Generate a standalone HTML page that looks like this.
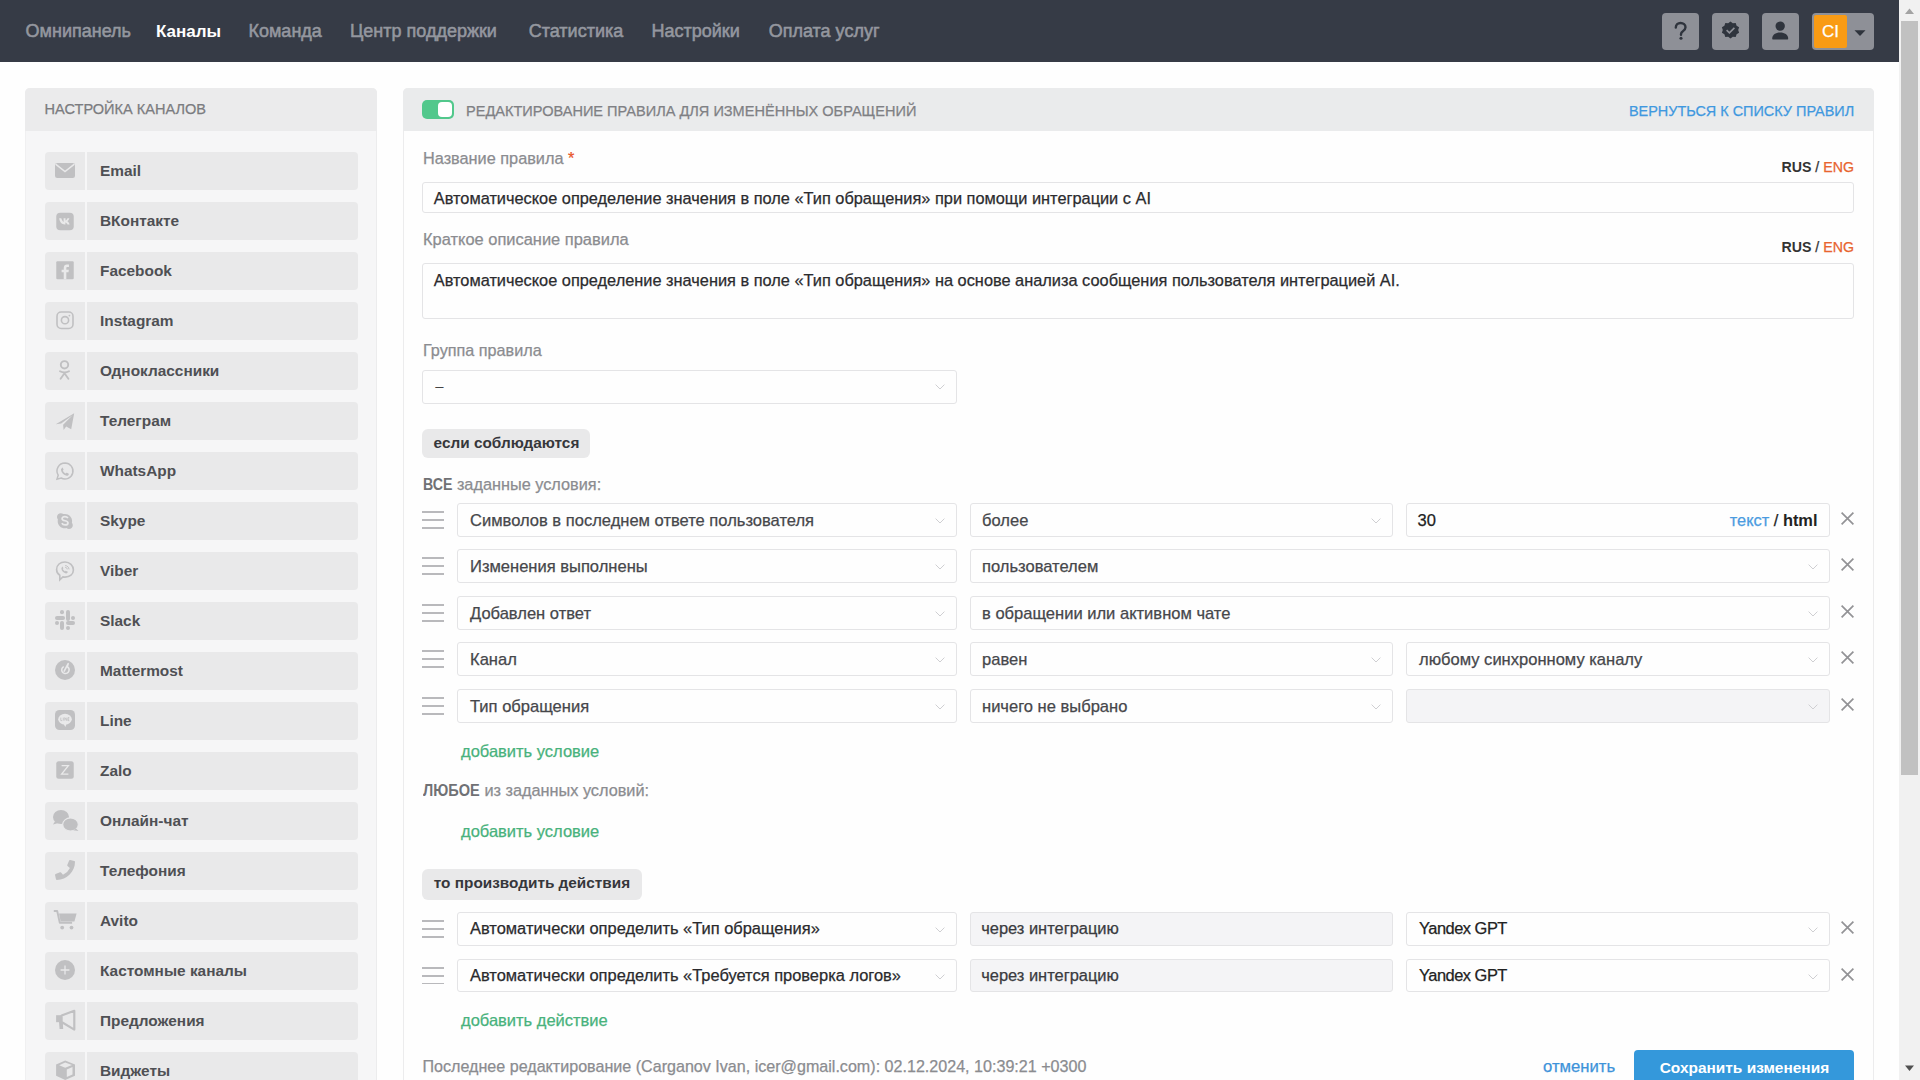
<!DOCTYPE html>
<html><head><meta charset="utf-8"><title>Rule editor</title>
<style>
html,body{margin:0;padding:0;width:1920px;height:1080px;overflow:hidden;background:#fefefe;}
body{position:relative;font-family:"Liberation Sans",sans-serif;}
.t{position:absolute;white-space:nowrap;-webkit-text-stroke:0.25px currentColor;}
.r{position:absolute;}
b{font-weight:700;-webkit-text-stroke:0;}
.tb{-webkit-text-stroke:0;}
</style></head><body>
<div class="r" style="left:0px;top:0px;width:1899px;height:62px;background:#363b46;"></div>
<div class="t" style="left:25.6px;top:20.06px;font-size:18px;line-height:22px;font-weight:400;color:#94979f;width:107px;-webkit-text-stroke:0.55px currentColor;">Омнипанель</div>
<div class="t tb" style="left:156px;top:20.91px;font-size:17px;line-height:21px;font-weight:700;color:#ffffff;width:68px;">Каналы</div>
<div class="t" style="left:248.5px;top:20.06px;font-size:18px;line-height:22px;font-weight:400;color:#94979f;width:77.5px;-webkit-text-stroke:0.55px currentColor;">Команда</div>
<div class="t" style="left:350px;top:20.06px;font-size:18px;line-height:22px;font-weight:400;color:#94979f;width:154.6px;-webkit-text-stroke:0.55px currentColor;">Центр поддержки</div>
<div class="t" style="left:528.7px;top:20.06px;font-size:18px;line-height:22px;font-weight:400;color:#94979f;width:99.3px;-webkit-text-stroke:0.55px currentColor;">Статистика</div>
<div class="t" style="left:651.5px;top:20.06px;font-size:18px;line-height:22px;font-weight:400;color:#94979f;width:93.5px;-webkit-text-stroke:0.55px currentColor;">Настройки</div>
<div class="t" style="left:768.7px;top:20.06px;font-size:18px;line-height:22px;font-weight:400;color:#94979f;width:111px;-webkit-text-stroke:0.55px currentColor;">Оплата услуг</div>
<div class="r" style="left:1662px;top:12.5px;width:37px;height:37.5px;background:#8e9097;border-radius:4px;"></div>
<div class="r" style="left:1712px;top:12.5px;width:37px;height:37.5px;background:#8e9097;border-radius:4px;"></div>
<div class="r" style="left:1762px;top:12.5px;width:37px;height:37.5px;background:#8e9097;border-radius:4px;"></div>
<svg class="r" style="left:1662px;top:12.5px" width="37" height="38" viewBox="0 0 37 38"><path d="M13.8 14.6c0-2.8 2.1-4.6 4.8-4.6s4.9 1.8 4.9 4.3c0 2-1.2 3-2.6 3.9-1.2.8-1.9 1.5-1.9 3v.6" fill="none" stroke="#2f343d" stroke-width="2.4" stroke-linecap="round"/><circle cx="19" cy="25.2" r="1.55" fill="#2f343d"/></svg>
<svg class="r" style="left:1712px;top:11.2px" width="37" height="38" viewBox="0 0 37 38"><path d="M18.5 10.5l2.3 1.7 2.9-.2.9 2.7 2.5 1.5-.9 2.8.9 2.8-2.5 1.5-.9 2.7-2.9-.2-2.3 1.7-2.3-1.7-2.9.2-.9-2.7-2.5-1.5.9-2.8-.9-2.8 2.5-1.5.9-2.7 2.9.2z" fill="#2f343d"/><path d="M14.6 19.2l2.8 2.7 5-5" fill="none" stroke="#8e9097" stroke-width="1.6"/></svg>
<svg class="r" style="left:1762px;top:12.5px" width="37" height="38" viewBox="0 0 37 38"><circle cx="18.2" cy="13.1" r="4.7" fill="#2f343d"/><path d="M10.2 25.8c0-4.1 3.6-6.2 8-6.2s8 2.1 8 6.2c0 .4-.3.7-.7.7H10.9c-.4 0-.7-.3-.7-.7z" fill="#2f343d"/></svg>
<div class="r" style="left:1812px;top:12.5px;width:62px;height:37.5px;background:#8e9097;border-radius:4px;"></div>
<div class="r" style="left:1814px;top:14.8px;width:33px;height:33.2px;background:#f99b14;border-radius:2px;"></div>
<div class="t" style="left:1830.5px;top:21.11px;font-size:17px;line-height:21px;font-weight:400;color:#ffffff;transform:translateX(-50%);">CI</div>
<svg class="r" style="left:1854px;top:29px" width="12" height="8" viewBox="0 0 12 8"><path d="M0.5 1.2h11L6 7z" fill="#2f343d"/></svg>
<div class="r" style="left:1899px;top:0px;width:21px;height:1080px;background:#f1f1f1;"></div>
<div class="r" style="left:1901px;top:21px;width:17px;height:754px;background:#c1c1c1;"></div>
<svg class="r" style="left:1899px;top:0" width="21" height="21" viewBox="0 0 21 21"><path d="M6 14h9l-4.5-5.4z" fill="#a3a3a3"/></svg>
<svg class="r" style="left:1899px;top:1059px" width="21" height="21" viewBox="0 0 21 21"><path d="M6 6.5h9l-4.5 5.4z" fill="#505050"/></svg>
<div class="r" style="left:25px;top:88px;width:352px;height:1000px;background:#f6f6f7;border-radius:5px 5px 0 0;box-shadow:inset -1px 0 0 #ececed, inset 1px 0 0 #f0f0f1;"></div>
<div class="r" style="left:25px;top:88px;width:352px;height:42.5px;background:#ebebec;border-radius:5px 5px 0 0;"></div>
<div class="t" style="left:44.6px;top:100.16px;font-size:14.55px;line-height:18px;font-weight:400;color:#7b7c80;">НАСТРОЙКА КАНАЛОВ</div>
<div class="r" style="left:45px;top:152px;width:40px;height:38px;background:#e9e9ea;border-radius:4px 0 0 4px;"></div>
<div class="r" style="left:87px;top:152px;width:271px;height:38px;background:#e9e9ea;border-radius:0 4px 4px 0;"></div>
<div class="t tb" style="left:100px;top:161.16px;font-size:15.4px;line-height:19px;font-weight:700;color:#4f5054;">Email</div>
<svg class="r" style="left:55px;top:160px" width="20" height="20" viewBox="0 0 20 20" overflow="visible"><rect x="0" y="3" width="20" height="15" rx="2.2" fill="#c0c0c2"/><path d="M0.6 4.2L10 11.6 19.4 4.2" fill="none" stroke="#e9e9ea" stroke-width="1.5"/></svg>
<div class="r" style="left:45px;top:202px;width:40px;height:38px;background:#e9e9ea;border-radius:4px 0 0 4px;"></div>
<div class="r" style="left:87px;top:202px;width:271px;height:38px;background:#e9e9ea;border-radius:0 4px 4px 0;"></div>
<div class="t tb" style="left:100px;top:211.16px;font-size:15.4px;line-height:19px;font-weight:700;color:#4f5054;">ВКонтакте</div>
<svg class="r" style="left:55px;top:210px" width="20" height="20" viewBox="0 0 20 20" overflow="visible"><rect x="1.25" y="2.8" width="17.5" height="17.5" rx="4" fill="#c0c0c2"/><path d="M4.2 8.3h2.1c.7 2 1.6 3.4 2.3 3.6V8.3h1.9v2.2c.8-.1 1.5-1.1 2-2.2h1.9c-.4 1.4-1.4 2.6-2.1 3 .7.3 1.8 1.3 2.3 3.1h-2.1c-.5-1.1-1.3-1.9-2.1-2v2H9.9c-3.3 0-5.3-2.3-5.7-6.1z" fill="#e9e9ea"/></svg>
<div class="r" style="left:45px;top:252px;width:40px;height:38px;background:#e9e9ea;border-radius:4px 0 0 4px;"></div>
<div class="r" style="left:87px;top:252px;width:271px;height:38px;background:#e9e9ea;border-radius:0 4px 4px 0;"></div>
<div class="t tb" style="left:100px;top:261.16px;font-size:15.4px;line-height:19px;font-weight:700;color:#4f5054;">Facebook</div>
<svg class="r" style="left:55px;top:260px" width="20" height="20" viewBox="0 0 20 20" overflow="visible"><rect x="1.25" y="1.25" width="17.5" height="18" rx="1.2" fill="#c0c0c2"/><path d="M11.3 19.25v-6.9h2.2l.35-2.6h-2.55V8.2c0-.75.25-1.25 1.3-1.25h1.35V4.6c-.25 0-1-.1-1.95-.1-1.95 0-3.25 1.2-3.25 3.35v1.9H6.6v2.6h2.15v6.9z" fill="#e9e9ea"/></svg>
<div class="r" style="left:45px;top:302px;width:40px;height:38px;background:#e9e9ea;border-radius:4px 0 0 4px;"></div>
<div class="r" style="left:87px;top:302px;width:271px;height:38px;background:#e9e9ea;border-radius:0 4px 4px 0;"></div>
<div class="t tb" style="left:100px;top:311.16px;font-size:15.4px;line-height:19px;font-weight:700;color:#4f5054;">Instagram</div>
<svg class="r" style="left:55px;top:310px" width="20" height="20" viewBox="0 0 20 20" overflow="visible"><rect x="2" y="2" width="16" height="16.5" rx="4.2" fill="none" stroke="#c0c0c2" stroke-width="1.6"/><circle cx="10" cy="10.2" r="3.6" fill="none" stroke="#c0c0c2" stroke-width="1.6"/><circle cx="14.4" cy="5.6" r="0.9" fill="#c0c0c2"/></svg>
<div class="r" style="left:45px;top:352px;width:40px;height:38px;background:#e9e9ea;border-radius:4px 0 0 4px;"></div>
<div class="r" style="left:87px;top:352px;width:271px;height:38px;background:#e9e9ea;border-radius:0 4px 4px 0;"></div>
<div class="t tb" style="left:100px;top:361.16px;font-size:15.4px;line-height:19px;font-weight:700;color:#4f5054;">Одноклассники</div>
<svg class="r" style="left:55px;top:360px" width="20" height="20" viewBox="0 0 20 20" overflow="visible"><circle cx="9.5" cy="4.8" r="3.7" fill="none" stroke="#c0c0c2" stroke-width="1.9"/><path d="M5 11.2c2.8 1.6 6.2 1.6 9 0" fill="none" stroke="#c0c0c2" stroke-width="1.9" stroke-linecap="round"/><path d="M9.5 13.2L5.6 18.8M9.5 13.2l3.9 5.6" fill="none" stroke="#c0c0c2" stroke-width="1.9" stroke-linecap="round"/></svg>
<div class="r" style="left:45px;top:402px;width:40px;height:38px;background:#e9e9ea;border-radius:4px 0 0 4px;"></div>
<div class="r" style="left:87px;top:402px;width:271px;height:38px;background:#e9e9ea;border-radius:0 4px 4px 0;"></div>
<div class="t tb" style="left:100px;top:411.16px;font-size:15.4px;line-height:19px;font-weight:700;color:#4f5054;">Телеграм</div>
<svg class="r" style="left:55px;top:410px" width="20" height="20" viewBox="0 0 20 20" overflow="visible"><path d="M0.8 14.3L19.2 3.2 16.2 19.2 11.2 16.4 8.6 20 8.1 14.7 17.5 5.2 6.2 13.4z" fill="#c0c0c2"/></svg>
<div class="r" style="left:45px;top:452px;width:40px;height:38px;background:#e9e9ea;border-radius:4px 0 0 4px;"></div>
<div class="r" style="left:87px;top:452px;width:271px;height:38px;background:#e9e9ea;border-radius:0 4px 4px 0;"></div>
<div class="t tb" style="left:100px;top:461.16px;font-size:15.4px;line-height:19px;font-weight:700;color:#4f5054;">WhatsApp</div>
<svg class="r" style="left:55px;top:460px" width="20" height="20" viewBox="0 0 20 20" overflow="visible"><path d="M10 3a8 8 0 0 0-6.8 12.2L2 19.2l4.1-1.2A8 8 0 1 0 10 3z" fill="none" stroke="#c0c0c2" stroke-width="1.5"/><path d="M7.2 7.4c.3 0 .6.1.7.5l.6 1.5c.1.3 0 .5-.2.7l-.5.6c.6 1.2 1.6 2.2 2.8 2.8l.6-.5c.2-.2.4-.3.7-.2l1.5.7c.3.1.4.4.4.7-.2 1.2-1.2 1.7-2.1 1.6-2.9-.4-5.3-2.8-5.7-5.7-.1-.9.4-1.9 1.3-2.2z" fill="#c0c0c2"/></svg>
<div class="r" style="left:45px;top:502px;width:40px;height:38px;background:#e9e9ea;border-radius:4px 0 0 4px;"></div>
<div class="r" style="left:87px;top:502px;width:271px;height:38px;background:#e9e9ea;border-radius:0 4px 4px 0;"></div>
<div class="t tb" style="left:100px;top:511.16px;font-size:15.4px;line-height:19px;font-weight:700;color:#4f5054;">Skype</div>
<svg class="r" style="left:55px;top:510px" width="20" height="20" viewBox="0 0 20 20" overflow="visible"><path d="M5.8 3.2c1 0 1.8.4 2.5.9.6-.1 1.1-.2 1.7-.2 3.9 0 7.1 3.2 7.1 7.1 0 .6-.1 1.1-.2 1.7.6.7.9 1.5.9 2.5 0 2.1-1.7 3.8-3.8 3.8-1 0-1.8-.4-2.5-.9-.6.1-1.1.2-1.7.2-3.9 0-7.1-3.2-7.1-7.1 0-.6.1-1.1.2-1.7-.6-.7-.9-1.5-.9-2.5 0-2.1 1.7-3.8 3.8-3.8z" fill="#c0c0c2"/><path d="M12.9 8.2c-.5-.9-1.6-1.5-3-1.5-1.7 0-2.8.8-2.8 2 0 2.7 5.9 1.5 5.9 4.2 0 1.2-1.2 2-2.9 2-1.5 0-2.7-.6-3.2-1.7" fill="none" stroke="#e9e9ea" stroke-width="1.7"/></svg>
<div class="r" style="left:45px;top:552px;width:40px;height:38px;background:#e9e9ea;border-radius:4px 0 0 4px;"></div>
<div class="r" style="left:87px;top:552px;width:271px;height:38px;background:#e9e9ea;border-radius:0 4px 4px 0;"></div>
<div class="t tb" style="left:100px;top:561.16px;font-size:15.4px;line-height:19px;font-weight:700;color:#4f5054;">Viber</div>
<svg class="r" style="left:55px;top:560px" width="20" height="20" viewBox="0 0 20 20" overflow="visible"><path d="M10 2C5.2 2 1.6 4.8 1.6 9.5c0 2.8 1.2 4.6 3.2 5.8v4.5l3.1-2.9c.7.1 1.4.2 2.1.2 4.8 0 8.4-2.8 8.4-7.1S14.8 2 10 2z" fill="none" stroke="#c0c0c2" stroke-width="1.6"/><path d="M7.1 6.3c.3 0 .5.2.6.4l.6 1.3c.1.3 0 .5-.2.7l-.4.4c.5 1 1.3 1.8 2.3 2.3l.4-.4c.2-.2.4-.2.7-.1l1.3.6c.3.1.4.4.4.6-.2 1-1 1.4-1.8 1.3-2.4-.3-4.3-2.2-4.6-4.6-.1-.7.3-1.5 1-1.7z" fill="#c0c0c2"/><path d="M10.6 5.6c1.8.2 3.2 1.6 3.4 3.4M10.6 7.4c.9.1 1.5.7 1.6 1.6" fill="none" stroke="#c0c0c2" stroke-width="1" stroke-linecap="round"/></svg>
<div class="r" style="left:45px;top:602px;width:40px;height:38px;background:#e9e9ea;border-radius:4px 0 0 4px;"></div>
<div class="r" style="left:87px;top:602px;width:271px;height:38px;background:#e9e9ea;border-radius:0 4px 4px 0;"></div>
<div class="t tb" style="left:100px;top:611.16px;font-size:15.4px;line-height:19px;font-weight:700;color:#4f5054;">Slack</div>
<svg class="r" style="left:55px;top:610px" width="20" height="20" viewBox="0 0 20 20" overflow="visible"><rect x="11" y="0" width="4" height="11" rx="2" fill="#c0c0c2"/><rect x="5" y="0" width="4" height="4.2" rx="2" fill="#c0c0c2"/><rect x="0" y="6" width="10" height="4" rx="2" fill="#c0c0c2"/><rect x="16" y="6" width="4" height="4" rx="2" fill="#c0c0c2"/><rect x="11" y="11" width="9" height="4" rx="2" fill="#c0c0c2"/><rect x="0" y="11" width="4" height="4" rx="2" fill="#c0c0c2"/><rect x="5" y="11" width="4" height="9" rx="2" fill="#c0c0c2"/><rect x="11" y="16" width="4" height="4" rx="2" fill="#c0c0c2"/></svg>
<div class="r" style="left:45px;top:652px;width:40px;height:38px;background:#e9e9ea;border-radius:4px 0 0 4px;"></div>
<div class="r" style="left:87px;top:652px;width:271px;height:38px;background:#e9e9ea;border-radius:0 4px 4px 0;"></div>
<div class="t tb" style="left:100px;top:661.16px;font-size:15.4px;line-height:19px;font-weight:700;color:#4f5054;">Mattermost</div>
<svg class="r" style="left:55px;top:660px" width="20" height="20" viewBox="0 0 20 20" overflow="visible"><circle cx="10" cy="10" r="10" fill="#c0c0c2"/><path d="M12.8 4.2l-.3 2.6c1.3.9 2 2.6 1.4 4.2-.6 2-2.7 3-4.6 2.4-2-.6-3-2.7-2.4-4.6.3-1 1-1.8 1.9-2.2" fill="none" stroke="#e9e9ea" stroke-width="1.5"/><path d="M13.2 3.6L9.2 11.2" stroke="#e9e9ea" stroke-width="1.6" stroke-linecap="round"/></svg>
<div class="r" style="left:45px;top:702px;width:40px;height:38px;background:#e9e9ea;border-radius:4px 0 0 4px;"></div>
<div class="r" style="left:87px;top:702px;width:271px;height:38px;background:#e9e9ea;border-radius:0 4px 4px 0;"></div>
<div class="t tb" style="left:100px;top:711.16px;font-size:15.4px;line-height:19px;font-weight:700;color:#4f5054;">Line</div>
<svg class="r" style="left:55px;top:710px" width="20" height="20" viewBox="0 0 20 20" overflow="visible"><rect x="0" y="0" width="20" height="20" rx="4.5" fill="#c0c0c2"/><ellipse cx="10" cy="9.2" rx="6.8" ry="5.4" fill="#e9e9ea"/><path d="M8.6 14l1.8 3 1.2-3.2z" fill="#e9e9ea"/><path d="M5.8 7.6v3h1.4M8.3 7.6v3M9.8 10.6v-3l2 3v-3M14.3 7.6h-1.3v3h1.3M13 9.1h1.2" fill="none" stroke="#c0c0c2" stroke-width="0.8"/></svg>
<div class="r" style="left:45px;top:752px;width:40px;height:38px;background:#e9e9ea;border-radius:4px 0 0 4px;"></div>
<div class="r" style="left:87px;top:752px;width:271px;height:38px;background:#e9e9ea;border-radius:0 4px 4px 0;"></div>
<div class="t tb" style="left:100px;top:761.16px;font-size:15.4px;line-height:19px;font-weight:700;color:#4f5054;">Zalo</div>
<svg class="r" style="left:55px;top:760px" width="20" height="20" viewBox="0 0 20 20" overflow="visible"><rect x="1.25" y="1.25" width="17.5" height="17.5" rx="2.5" fill="#c0c0c2"/><path d="M6.6 5.6h6.8l-6.8 8.6h6.8" fill="none" stroke="#e9e9ea" stroke-width="1.3"/></svg>
<div class="r" style="left:45px;top:802px;width:40px;height:38px;background:#e9e9ea;border-radius:4px 0 0 4px;"></div>
<div class="r" style="left:87px;top:802px;width:271px;height:38px;background:#e9e9ea;border-radius:0 4px 4px 0;"></div>
<div class="t tb" style="left:100px;top:811.16px;font-size:15.4px;line-height:19px;font-weight:700;color:#4f5054;">Онлайн-чат</div>
<svg class="r" style="left:55px;top:810px" width="20" height="20" viewBox="0 0 20 20" overflow="visible"><ellipse cx="6" cy="7" rx="8" ry="7" fill="#c0c0c2"/><path d="M0 11.2L-2 14.5 3.5 13z" fill="#c0c0c2"/><ellipse cx="15.5" cy="14.5" rx="7.8" ry="6.6" fill="#c0c0c2" stroke="#e9e9ea" stroke-width="1.1"/><path d="M21 18.5l2.5 2.5-5.2-.8z" fill="#c0c0c2"/></svg>
<div class="r" style="left:45px;top:852px;width:40px;height:38px;background:#e9e9ea;border-radius:4px 0 0 4px;"></div>
<div class="r" style="left:87px;top:852px;width:271px;height:38px;background:#e9e9ea;border-radius:0 4px 4px 0;"></div>
<div class="t tb" style="left:100px;top:861.16px;font-size:15.4px;line-height:19px;font-weight:700;color:#4f5054;">Телефония</div>
<svg class="r" style="left:55px;top:860px" width="20" height="20" viewBox="0 0 20 20" overflow="visible"><g transform="translate(20,0) scale(-0.039,0.039)"><path d="M497.39 361.8l-112-48a24 24 0 0 0-28 6.9l-49.6 60.6A370.66 370.66 0 0 1 130.6 204.11l60.6-49.6a23.94 23.94 0 0 0 6.9-28l-48-112A24.16 24.16 0 0 0 122.6.61l-104 24A24 24 0 0 0 0 48c0 256.5 207.9 464 464 464a24 24 0 0 0 23.4-18.6l24-104a24.29 24.29 0 0 0-14.01-27.6z" fill="#c0c0c2"/></g></svg>
<div class="r" style="left:45px;top:902px;width:40px;height:38px;background:#e9e9ea;border-radius:4px 0 0 4px;"></div>
<div class="r" style="left:87px;top:902px;width:271px;height:38px;background:#e9e9ea;border-radius:0 4px 4px 0;"></div>
<div class="t tb" style="left:100px;top:911.16px;font-size:15.4px;line-height:19px;font-weight:700;color:#4f5054;">Avito</div>
<svg class="r" style="left:55px;top:910px" width="20" height="20" viewBox="0 0 20 20" overflow="visible"><path d="M-1.2 1h3.4l2.6 11.8h12.3" fill="none" stroke="#c0c0c2" stroke-width="1.9" stroke-linejoin="round"/><path d="M4 3.4h17.6l-2.2 8H5.6z" fill="#c0c0c2"/><circle cx="7.2" cy="17.6" r="1.9" fill="#c0c0c2"/><circle cx="16.5" cy="17.6" r="1.9" fill="#c0c0c2"/></svg>
<div class="r" style="left:45px;top:952px;width:40px;height:38px;background:#e9e9ea;border-radius:4px 0 0 4px;"></div>
<div class="r" style="left:87px;top:952px;width:271px;height:38px;background:#e9e9ea;border-radius:0 4px 4px 0;"></div>
<div class="t tb" style="left:100px;top:961.16px;font-size:15.4px;line-height:19px;font-weight:700;color:#4f5054;">Кастомные каналы</div>
<svg class="r" style="left:55px;top:960px" width="20" height="20" viewBox="0 0 20 20" overflow="visible"><circle cx="10" cy="10" r="10" fill="#c0c0c2"/><path d="M10 5.6v8.8M5.6 10h8.8" stroke="#e9e9ea" stroke-width="1.3"/></svg>
<div class="r" style="left:45px;top:1002px;width:40px;height:38px;background:#e9e9ea;border-radius:4px 0 0 4px;"></div>
<div class="r" style="left:87px;top:1002px;width:271px;height:38px;background:#e9e9ea;border-radius:0 4px 4px 0;"></div>
<div class="t tb" style="left:100px;top:1011.16px;font-size:15.4px;line-height:19px;font-weight:700;color:#4f5054;">Предложения</div>
<svg class="r" style="left:55px;top:1010px" width="20" height="20" viewBox="0 0 20 20" overflow="visible"><path d="M1.1 5.2h5.6v7H1.1z" fill="#c0c0c2"/><path d="M4 12h3.8l.4 7H4.6z" fill="#c0c0c2"/><path d="M6.6 5.5L19.3 0.8v18.8L6.6 12z" fill="none" stroke="#c0c0c2" stroke-width="2.2" stroke-linejoin="round"/></svg>
<div class="r" style="left:45px;top:1052px;width:40px;height:38px;background:#e9e9ea;border-radius:4px 0 0 4px;"></div>
<div class="r" style="left:87px;top:1052px;width:271px;height:38px;background:#e9e9ea;border-radius:0 4px 4px 0;"></div>
<div class="t tb" style="left:100px;top:1061.16px;font-size:15.4px;line-height:19px;font-weight:700;color:#4f5054;">Виджеты</div>
<svg class="r" style="left:55px;top:1060px" width="20" height="20" viewBox="0 0 20 20" overflow="visible"><path d="M10.2 0.5L20 4.4v11.3l-9.8 4.3L1.1 15.7V4.4z" fill="#c0c0c2"/><path d="M4.2 5.2l6 2.6 6.8-2.8-6.8-2.6z" fill="#e9e9ea"/><path d="M11.8 9.4l5.7-2.4v7.4l-5.7 2.6z" fill="#e9e9ea"/></svg>
<div class="r" style="left:403px;top:88px;width:1471px;height:1000px;background:#fefefe;border-radius:5px 5px 0 0;box-shadow:inset 1px 0 0 #ececed, inset -1px 0 0 #ececed;"></div>
<div class="r" style="left:403px;top:88px;width:1471px;height:42.5px;background:#eaebec;border-radius:5px 5px 0 0;"></div>
<div class="r" style="left:422px;top:100px;width:32px;height:19px;background:#52c88c;border-radius:5px;"></div>
<div class="r" style="left:437.5px;top:102px;width:14.5px;height:15px;background:#ffffff;border-radius:4px;"></div>
<div class="t" style="left:466px;top:101.96px;font-size:14.55px;line-height:18px;font-weight:400;color:#7f8084;">РЕДАКТИРОВАНИЕ ПРАВИЛА ДЛЯ ИЗМЕНЁННЫХ ОБРАЩЕНИЙ</div>
<div class="t" style="right:65.79999999999995px;top:101.99px;font-size:14.45px;line-height:18px;font-weight:400;color:#3f98df;">ВЕРНУТЬСЯ К СПИСКУ ПРАВИЛ</div>
<div class="t" style="left:423px;top:147.95px;font-size:16.3px;line-height:20px;font-weight:400;color:#8b8c90;">Название правила <span style="color:#e8552a">*</span></div>
<div class="t" style="right:66px;top:158.28px;font-size:14.2px;line-height:18px;font-weight:400;color:#333;"><b style="color:#333">RUS</b> <span style="color:#333">/</span> <span style="color:#e8652f">ENG</span></div>
<div class="r" style="left:422px;top:182px;width:1432px;height:31px;border:1px solid #e4e4e6;border-radius:3px;box-sizing:border-box;background:#fefefe;"></div>
<div class="t" style="left:433.8px;top:188.03px;font-size:16.35px;line-height:20px;font-weight:400;color:#2b2b2e;">Автоматическое определение значения в поле «Тип обращения» при помощи интеграции с AI</div>
<div class="t" style="left:423px;top:228.80px;font-size:16.45px;line-height:21px;font-weight:400;color:#8b8c90;">Краткое описание правила</div>
<div class="t" style="right:66px;top:238.48px;font-size:14.2px;line-height:18px;font-weight:400;color:#333;"><b style="color:#333">RUS</b> <span style="color:#333">/</span> <span style="color:#e8652f">ENG</span></div>
<div class="r" style="left:422px;top:263px;width:1432px;height:56px;border:1px solid #e4e4e6;border-radius:3px;box-sizing:border-box;background:#fefefe;"></div>
<div class="t" style="left:433.8px;top:270.33px;font-size:16.35px;line-height:20px;font-weight:400;color:#2b2b2e;">Автоматическое определение значения в поле «Тип обращения» на основе анализа сообщения пользователя интеграцией AI.</div>
<div class="t" style="left:423px;top:339.89px;font-size:16.2px;line-height:20px;font-weight:400;color:#8b8c90;">Группа правила</div>
<div class="r" style="left:422px;top:370px;width:535px;height:34px;border:1px solid #e4e4e6;border-radius:3px;box-sizing:border-box;background:#fefefe;"></div>
<div class="t" style="left:435.5px;top:377.15px;font-size:14px;line-height:18px;font-weight:400;color:#444;">–</div>
<svg class="r" style="left:934.5px;top:384px" width="10" height="6" viewBox="0 0 10 6"><path d="M0.6 0.6L5 5 9.4 0.6" fill="none" stroke="#cfcfd2" stroke-width="1"/></svg>
<div class="r" style="left:422px;top:429px;width:168px;height:29px;background:#e9e9ea;border-radius:6px;"></div>
<div class="t tb" style="left:433.6px;top:433.48px;font-size:15.35px;line-height:19px;font-weight:700;color:#36373b;">если соблюдаются</div>
<div class="t" style="left:423px;top:473.65px;font-size:16.3px;line-height:20px;font-weight:400;color:#8b8c90;"><b style="color:#707175;display:inline-block;transform:scaleX(0.87);transform-origin:0 0;margin-right:-4.4px">ВСЕ</b> заданные условия:</div>
<div class="r" style="left:422px;top:511.4px;width:22px;height:1.9px;background:#b9b9bc;"></div>
<div class="r" style="left:422px;top:519.25px;width:22px;height:1.9px;background:#b9b9bc;"></div>
<div class="r" style="left:422px;top:527.1px;width:22px;height:1.9px;background:#b9b9bc;"></div>
<div class="r" style="left:457px;top:503px;width:500px;height:34px;border:1px solid #e4e4e6;border-radius:3px;box-sizing:border-box;background:#fefefe;"></div>
<div class="t" style="left:470px;top:509.77px;font-size:16.55px;line-height:21px;font-weight:400;color:#46474b;">Символов в последнем ответе пользователя</div>
<svg class="r" style="left:934.5px;top:518px" width="10" height="6" viewBox="0 0 10 6"><path d="M0.6 0.6L5 5 9.4 0.6" fill="none" stroke="#cfcfd2" stroke-width="1"/></svg>
<div class="r" style="left:970px;top:503px;width:423px;height:34px;border:1px solid #e4e4e6;border-radius:3px;box-sizing:border-box;background:#fefefe;"></div>
<div class="t" style="left:982px;top:509.77px;font-size:16.55px;line-height:21px;font-weight:400;color:#46474b;">более</div>
<svg class="r" style="left:1371px;top:518px" width="10" height="6" viewBox="0 0 10 6"><path d="M0.6 0.6L5 5 9.4 0.6" fill="none" stroke="#cfcfd2" stroke-width="1"/></svg>
<div class="r" style="left:1406px;top:503px;width:424px;height:34px;border:1px solid #e4e4e6;border-radius:3px;box-sizing:border-box;background:#fefefe;"></div>
<div class="t" style="left:1417.6px;top:509.77px;font-size:16.55px;line-height:21px;font-weight:400;color:#222;">30</div>
<div class="t" style="right:102.5px;top:509.82px;font-size:16.4px;line-height:20px;font-weight:400;color:#222;"><span style="color:#4a9be0">текст</span> / <b>html</b></div>
<svg class="r" style="left:1840.5px;top:512.2px" width="13" height="13" viewBox="0 0 13 13"><path d="M0.6 0.6l11.8 11.8M12.4 0.6L0.6 12.4" stroke="#939396" stroke-width="1.7"/></svg>
<div class="r" style="left:422px;top:557.4px;width:22px;height:1.9px;background:#b9b9bc;"></div>
<div class="r" style="left:422px;top:565.25px;width:22px;height:1.9px;background:#b9b9bc;"></div>
<div class="r" style="left:422px;top:573.1px;width:22px;height:1.9px;background:#b9b9bc;"></div>
<div class="r" style="left:457px;top:549px;width:500px;height:34px;border:1px solid #e4e4e6;border-radius:3px;box-sizing:border-box;background:#fefefe;"></div>
<div class="t" style="left:470px;top:555.77px;font-size:16.55px;line-height:21px;font-weight:400;color:#46474b;">Изменения выполнены</div>
<svg class="r" style="left:934.5px;top:564px" width="10" height="6" viewBox="0 0 10 6"><path d="M0.6 0.6L5 5 9.4 0.6" fill="none" stroke="#cfcfd2" stroke-width="1"/></svg>
<div class="r" style="left:970px;top:549px;width:860px;height:34px;border:1px solid #e4e4e6;border-radius:3px;box-sizing:border-box;background:#fefefe;"></div>
<div class="t" style="left:982px;top:555.77px;font-size:16.55px;line-height:21px;font-weight:400;color:#46474b;">пользователем</div>
<svg class="r" style="left:1808px;top:564px" width="10" height="6" viewBox="0 0 10 6"><path d="M0.6 0.6L5 5 9.4 0.6" fill="none" stroke="#cfcfd2" stroke-width="1"/></svg>
<svg class="r" style="left:1840.5px;top:558.2px" width="13" height="13" viewBox="0 0 13 13"><path d="M0.6 0.6l11.8 11.8M12.4 0.6L0.6 12.4" stroke="#939396" stroke-width="1.7"/></svg>
<div class="r" style="left:422px;top:604.4px;width:22px;height:1.9px;background:#b9b9bc;"></div>
<div class="r" style="left:422px;top:612.25px;width:22px;height:1.9px;background:#b9b9bc;"></div>
<div class="r" style="left:422px;top:620.1px;width:22px;height:1.9px;background:#b9b9bc;"></div>
<div class="r" style="left:457px;top:596px;width:500px;height:34px;border:1px solid #e4e4e6;border-radius:3px;box-sizing:border-box;background:#fefefe;"></div>
<div class="t" style="left:470px;top:602.77px;font-size:16.55px;line-height:21px;font-weight:400;color:#46474b;">Добавлен ответ</div>
<svg class="r" style="left:934.5px;top:611px" width="10" height="6" viewBox="0 0 10 6"><path d="M0.6 0.6L5 5 9.4 0.6" fill="none" stroke="#cfcfd2" stroke-width="1"/></svg>
<div class="r" style="left:970px;top:596px;width:860px;height:34px;border:1px solid #e4e4e6;border-radius:3px;box-sizing:border-box;background:#fefefe;"></div>
<div class="t" style="left:982px;top:602.77px;font-size:16.55px;line-height:21px;font-weight:400;color:#46474b;">в обращении или активном чате</div>
<svg class="r" style="left:1808px;top:611px" width="10" height="6" viewBox="0 0 10 6"><path d="M0.6 0.6L5 5 9.4 0.6" fill="none" stroke="#cfcfd2" stroke-width="1"/></svg>
<svg class="r" style="left:1840.5px;top:605.2px" width="13" height="13" viewBox="0 0 13 13"><path d="M0.6 0.6l11.8 11.8M12.4 0.6L0.6 12.4" stroke="#939396" stroke-width="1.7"/></svg>
<div class="r" style="left:422px;top:650.4px;width:22px;height:1.9px;background:#b9b9bc;"></div>
<div class="r" style="left:422px;top:658.25px;width:22px;height:1.9px;background:#b9b9bc;"></div>
<div class="r" style="left:422px;top:666.1px;width:22px;height:1.9px;background:#b9b9bc;"></div>
<div class="r" style="left:457px;top:642px;width:500px;height:34px;border:1px solid #e4e4e6;border-radius:3px;box-sizing:border-box;background:#fefefe;"></div>
<div class="t" style="left:470px;top:648.77px;font-size:16.55px;line-height:21px;font-weight:400;color:#46474b;">Канал</div>
<svg class="r" style="left:934.5px;top:657px" width="10" height="6" viewBox="0 0 10 6"><path d="M0.6 0.6L5 5 9.4 0.6" fill="none" stroke="#cfcfd2" stroke-width="1"/></svg>
<div class="r" style="left:970px;top:642px;width:423px;height:34px;border:1px solid #e4e4e6;border-radius:3px;box-sizing:border-box;background:#fefefe;"></div>
<div class="t" style="left:982px;top:648.77px;font-size:16.55px;line-height:21px;font-weight:400;color:#46474b;">равен</div>
<svg class="r" style="left:1371px;top:657px" width="10" height="6" viewBox="0 0 10 6"><path d="M0.6 0.6L5 5 9.4 0.6" fill="none" stroke="#cfcfd2" stroke-width="1"/></svg>
<div class="r" style="left:1406px;top:642px;width:424px;height:34px;border:1px solid #e4e4e6;border-radius:3px;box-sizing:border-box;background:#fefefe;"></div>
<div class="t" style="left:1419px;top:648.77px;font-size:16.55px;line-height:21px;font-weight:400;color:#46474b;">любому синхронному каналу</div>
<svg class="r" style="left:1808px;top:657px" width="10" height="6" viewBox="0 0 10 6"><path d="M0.6 0.6L5 5 9.4 0.6" fill="none" stroke="#cfcfd2" stroke-width="1"/></svg>
<svg class="r" style="left:1840.5px;top:651.2px" width="13" height="13" viewBox="0 0 13 13"><path d="M0.6 0.6l11.8 11.8M12.4 0.6L0.6 12.4" stroke="#939396" stroke-width="1.7"/></svg>
<div class="r" style="left:422px;top:697.4px;width:22px;height:1.9px;background:#b9b9bc;"></div>
<div class="r" style="left:422px;top:705.25px;width:22px;height:1.9px;background:#b9b9bc;"></div>
<div class="r" style="left:422px;top:713.1px;width:22px;height:1.9px;background:#b9b9bc;"></div>
<div class="r" style="left:457px;top:689px;width:500px;height:34px;border:1px solid #e4e4e6;border-radius:3px;box-sizing:border-box;background:#fefefe;"></div>
<div class="t" style="left:470px;top:695.77px;font-size:16.55px;line-height:21px;font-weight:400;color:#46474b;">Тип обращения</div>
<svg class="r" style="left:934.5px;top:704px" width="10" height="6" viewBox="0 0 10 6"><path d="M0.6 0.6L5 5 9.4 0.6" fill="none" stroke="#cfcfd2" stroke-width="1"/></svg>
<div class="r" style="left:970px;top:689px;width:423px;height:34px;border:1px solid #e4e4e6;border-radius:3px;box-sizing:border-box;background:#fefefe;"></div>
<div class="t" style="left:982px;top:695.77px;font-size:16.55px;line-height:21px;font-weight:400;color:#46474b;">ничего не выбрано</div>
<svg class="r" style="left:1371px;top:704px" width="10" height="6" viewBox="0 0 10 6"><path d="M0.6 0.6L5 5 9.4 0.6" fill="none" stroke="#cfcfd2" stroke-width="1"/></svg>
<div class="r" style="left:1406px;top:689px;width:424px;height:34px;border:1px solid #e4e4e6;border-radius:3px;box-sizing:border-box;background:#f4f4f6;"></div>
<svg class="r" style="left:1808px;top:704px" width="10" height="6" viewBox="0 0 10 6"><path d="M0.6 0.6L5 5 9.4 0.6" fill="none" stroke="#cfcfd2" stroke-width="1"/></svg>
<svg class="r" style="left:1840.5px;top:698.2px" width="13" height="13" viewBox="0 0 13 13"><path d="M0.6 0.6l11.8 11.8M12.4 0.6L0.6 12.4" stroke="#939396" stroke-width="1.7"/></svg>
<div class="t" style="left:461px;top:741.08px;font-size:16.5px;line-height:21px;font-weight:400;color:#48b27c;">добавить условие</div>
<div class="t" style="left:423px;top:780.05px;font-size:16.3px;line-height:20px;font-weight:400;color:#8b8c90;"><b style="color:#707175;display:inline-block;transform:scaleX(0.895);transform-origin:0 0;margin-right:-6.6px">ЛЮБОЕ</b> из заданных условий:</div>
<div class="t" style="left:461px;top:821.38px;font-size:16.5px;line-height:21px;font-weight:400;color:#48b27c;">добавить условие</div>
<div class="r" style="left:422px;top:869px;width:219.5px;height:30.5px;background:#e9e9ea;border-radius:6px;"></div>
<div class="t tb" style="left:433.8px;top:873.48px;font-size:15.35px;line-height:19px;font-weight:700;color:#36373b;">то производить действия</div>
<div class="r" style="left:422px;top:920.4px;width:22px;height:1.9px;background:#b9b9bc;"></div>
<div class="r" style="left:422px;top:928.25px;width:22px;height:1.9px;background:#b9b9bc;"></div>
<div class="r" style="left:422px;top:936.1px;width:22px;height:1.9px;background:#b9b9bc;"></div>
<div class="r" style="left:457px;top:912px;width:500px;height:33.5px;border:1px solid #e4e4e6;border-radius:3px;box-sizing:border-box;background:#fefefe;"></div>
<div class="t" style="left:470px;top:918.30px;font-size:16.45px;line-height:21px;font-weight:400;color:#2a2a2d;">Автоматически определить «Тип обращения»</div>
<svg class="r" style="left:934.5px;top:927px" width="10" height="6" viewBox="0 0 10 6"><path d="M0.6 0.6L5 5 9.4 0.6" fill="none" stroke="#cfcfd2" stroke-width="1"/></svg>
<div class="r" style="left:970px;top:912px;width:423px;height:33.5px;border:1px solid #e4e4e6;border-radius:3px;box-sizing:border-box;background:#f4f4f6;"></div>
<div class="t" style="left:981.2px;top:918.30px;font-size:16.45px;line-height:21px;font-weight:400;color:#3a3b3f;">через интеграцию</div>
<div class="r" style="left:1406px;top:912px;width:424px;height:33.5px;border:1px solid #e4e4e6;border-radius:3px;box-sizing:border-box;background:#fefefe;"></div>
<div class="t" style="left:1419px;top:918.30px;font-size:16.45px;line-height:21px;font-weight:400;color:#222;letter-spacing:-0.5px;">Yandex GPT</div>
<svg class="r" style="left:1808px;top:927px" width="10" height="6" viewBox="0 0 10 6"><path d="M0.6 0.6L5 5 9.4 0.6" fill="none" stroke="#cfcfd2" stroke-width="1"/></svg>
<svg class="r" style="left:1840.5px;top:921.2px" width="13" height="13" viewBox="0 0 13 13"><path d="M0.6 0.6l11.8 11.8M12.4 0.6L0.6 12.4" stroke="#939396" stroke-width="1.7"/></svg>
<div class="r" style="left:422px;top:966.9px;width:22px;height:1.9px;background:#b9b9bc;"></div>
<div class="r" style="left:422px;top:974.75px;width:22px;height:1.9px;background:#b9b9bc;"></div>
<div class="r" style="left:422px;top:982.6px;width:22px;height:1.9px;background:#b9b9bc;"></div>
<div class="r" style="left:457px;top:958.5px;width:500px;height:33.5px;border:1px solid #e4e4e6;border-radius:3px;box-sizing:border-box;background:#fefefe;"></div>
<div class="t" style="left:470px;top:964.80px;font-size:16.45px;line-height:21px;font-weight:400;color:#2a2a2d;">Автоматически определить «Требуется проверка логов»</div>
<svg class="r" style="left:934.5px;top:973.5px" width="10" height="6" viewBox="0 0 10 6"><path d="M0.6 0.6L5 5 9.4 0.6" fill="none" stroke="#cfcfd2" stroke-width="1"/></svg>
<div class="r" style="left:970px;top:958.5px;width:423px;height:33.5px;border:1px solid #e4e4e6;border-radius:3px;box-sizing:border-box;background:#f4f4f6;"></div>
<div class="t" style="left:981.2px;top:964.80px;font-size:16.45px;line-height:21px;font-weight:400;color:#3a3b3f;">через интеграцию</div>
<div class="r" style="left:1406px;top:958.5px;width:424px;height:33.5px;border:1px solid #e4e4e6;border-radius:3px;box-sizing:border-box;background:#fefefe;"></div>
<div class="t" style="left:1419px;top:964.80px;font-size:16.45px;line-height:21px;font-weight:400;color:#222;letter-spacing:-0.5px;">Yandex GPT</div>
<svg class="r" style="left:1808px;top:973.5px" width="10" height="6" viewBox="0 0 10 6"><path d="M0.6 0.6L5 5 9.4 0.6" fill="none" stroke="#cfcfd2" stroke-width="1"/></svg>
<svg class="r" style="left:1840.5px;top:967.7px" width="13" height="13" viewBox="0 0 13 13"><path d="M0.6 0.6l11.8 11.8M12.4 0.6L0.6 12.4" stroke="#939396" stroke-width="1.7"/></svg>
<div class="t" style="left:461px;top:1010.48px;font-size:16.5px;line-height:21px;font-weight:400;color:#48b27c;">добавить действие</div>
<div class="t" style="left:422.5px;top:1055.92px;font-size:16.1px;line-height:20px;font-weight:400;color:#8b8c90;">Последнее редактирование (Carganov Ivan, icer@gmail.com): 02.12.2024, 10:39:21 +0300</div>
<div class="t" style="left:1543px;top:1056.21px;font-size:16.7px;line-height:21px;font-weight:400;color:#3d93da;">отменить</div>
<div class="r" style="left:1634px;top:1050px;width:220px;height:40px;background:#3498db;border-radius:4px;"></div>
<div class="t tb" style="left:1659.7px;top:1058.35px;font-size:15.45px;line-height:19px;font-weight:700;color:#ffffff;">Сохранить изменения</div>
</body></html>
